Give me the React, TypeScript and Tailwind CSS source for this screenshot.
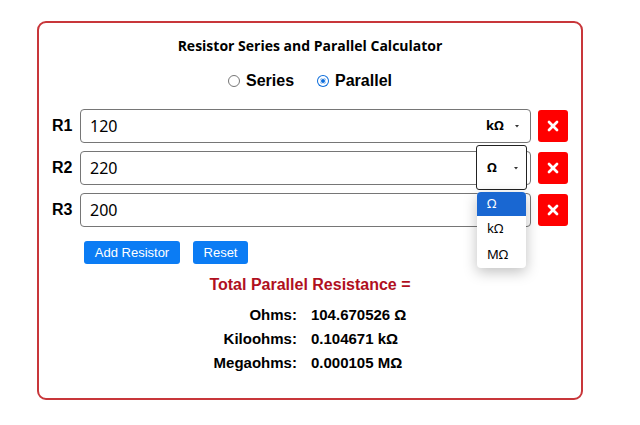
import { X } from "lucide-react";

const resistors = [
  { id: "R1", value: "120", unit: "kΩ" },
  { id: "R2", value: "220", unit: "Ω", open: true },
  { id: "R3", value: "200", unit: "" },
];

const results = [
  { label: "Ohms:", value: "104.670526 Ω" },
  { label: "Kiloohms:", value: "0.104671 kΩ" },
  { label: "Megaohms:", value: "0.000105 MΩ" },
];

const arial = { fontFamily: '"Liberation Sans", Arial, sans-serif' };
const noto = { fontFamily: '"Noto Sans", "Open Sans", sans-serif' };

function Radio({ checked, label }: { checked?: boolean; label: string }) {
  return (
    <label className="flex items-center gap-[6px]">
      {checked ? (
        <span className="flex h-[12px] w-[12px] items-center justify-center rounded-full bg-[#0b6cdb]">
          <span className="h-[6px] w-[6px] rounded-full border border-white bg-[#0b6cdb] outline outline-2 outline-white" />
        </span>
      ) : (
        <span className="h-[12px] w-[12px] rounded-full border border-[#767676] bg-white" />
      )}
      <span className="text-[16px] font-bold leading-[20px] text-black">{label}</span>
    </label>
  );
}

function UnitSelect({ unit, open }: { unit: string; open?: boolean }) {
  return (
    <div
      className={
        open
          ? "absolute right-[4px] top-[-6px] z-10 flex h-[45px] w-[51px] items-center rounded-[3px] border border-[#222] bg-white pl-[10px] pr-[6px]"
          : "absolute right-[4px] top-0 flex h-full w-[51px] items-center pl-[10px] pr-[6px]"
      }
      style={noto}
    >
      <span className="flex-1 text-[13px] font-bold text-black">{unit}</span>
      <svg width="8" height="5" viewBox="0 0 8 5" className="mt-[1px]">
        <path d="M2 1h4L4 3.5z" fill="#333" />
      </svg>
      {open && (
        <div className="absolute left-0 top-[46px] w-[49px] overflow-hidden rounded-[4px] bg-white shadow-[0_4px_14px_rgba(0,0,0,0.25)]">
          <div className="flex h-[24px] items-center bg-[#1967d2] pl-[10px] text-[13px] text-white">Ω</div>
          <div className="flex h-[26px] items-center pl-[10px] text-[13px] text-black">kΩ</div>
          <div className="flex h-[26px] items-center pl-[10px] text-[13px] text-black">MΩ</div>
        </div>
      )}
    </div>
  );
}

export default function App() {
  return (
    <div className="min-h-[425px] w-[640px] bg-white pl-[37px] pt-[21px]" style={arial}>
      <div className="flex h-[379px] w-[546px] flex-col rounded-[9px] border-2 border-[#c8363a] pl-[13px] pr-[13px] pt-[14px]">
        <h1
          className="text-center text-[14px] font-bold leading-[18px] text-black"
          style={{ fontFamily: '"Open Sans", "Noto Sans", sans-serif' }}
        >
          Resistor Series and Parallel Calculator
        </h1>

        <div className="mt-[16px] flex justify-center gap-[23px]">
          <Radio label="Series" />
          <Radio label="Parallel" checked />
        </div>

        <div className="mt-[18px] flex flex-col gap-[8px]">
          {resistors.map((r) => (
            <div key={r.id} className="flex h-[34px] items-center">
              <span className="w-[28px] text-[16px] font-bold text-black">{r.id}</span>
              <div className="relative h-[34px] w-[451px]">
                <div
                  className="flex h-full items-center rounded-[4px] border border-[#767676] bg-white pl-[9px] text-[16px] text-black"
                  style={noto}
                >
                  {r.value}
                </div>
                {r.unit && <UnitSelect unit={r.unit} open={r.open} />}
              </div>
              <button className="ml-[7px] flex h-[32px] w-[30px] items-center justify-center rounded-[3px] bg-[#f00] text-white">
                <X size={16} strokeWidth={4} />
              </button>
            </div>
          ))}
        </div>

        <div className="ml-[32px] mt-[14px] flex gap-[13px]">
          <button className="h-[23px] w-[96px] rounded-[3px] bg-[#0b7cf4] text-[13px] text-white">Add Resistor</button>
          <button className="h-[23px] w-[55px] rounded-[3px] bg-[#0b7cf4] text-[13px] text-white">Reset</button>
        </div>

        <div className="mt-[11px] text-center text-[16px] font-bold leading-[20px] text-[#b0101e]">
          Total Parallel Resistance =
        </div>

        <div className="mt-[8px] flex justify-center">
          <div className="grid grid-cols-[auto_auto] gap-x-[14px]">
            {results.map((row) => (
              <div key={row.label} className="contents">
                <span className="text-right text-[15px] font-bold leading-[24px] text-black">{row.label}</span>
                <span className="text-[15px] font-bold leading-[24px] text-black">{row.value}</span>
              </div>
            ))}
          </div>
        </div>
      </div>
    </div>
  );
}
